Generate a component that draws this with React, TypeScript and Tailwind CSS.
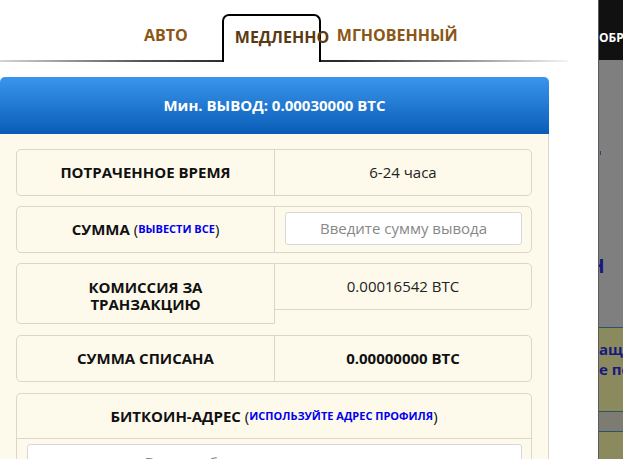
export default function App() {
  const bd = "border-[#dad7ca]";
  return (
    <div className="flex w-[623px] h-[459px] overflow-hidden bg-white font-['Open_Sans',sans-serif]">
      {/* modal */}
      <div className="w-[598px] shrink-0 bg-white flex flex-col">
        {/* tabs */}
        <div className="flex flex-col">
          <div className="flex items-end h-[60px] pl-[144px]">
            <div className="h-[46px] pb-[4px] flex items-center text-[16px] font-bold text-[#8a5716] whitespace-nowrap">АВТО</div>
            <div className="relative z-10 ml-[34px] -mb-[2px] w-[99px] h-[48px] border-2 border-b-0 border-black rounded-t-[7px] bg-white pl-[11px] flex items-center pb-[4px] text-[16px] font-bold text-[#5a3a12] whitespace-nowrap">
              МЕДЛЕННО
            </div>
            <div className="ml-[16px] h-[46px] pb-[4px] flex items-center text-[16px] font-bold text-[#8a5716] whitespace-nowrap">МГНОВЕННЫЙ</div>
          </div>
          <div className="w-[568px] h-[2px] bg-[linear-gradient(to_right,#d4d4d4,#555_25%,#2a2a2a_40%,#2a2a2a_60%,#888_80%,#f4f4f4)]" />
        </div>

        {/* panel */}
        <div className="mt-[15px] w-[549px] flex flex-col flex-1">
          <div className="h-[57px] rounded-t-[5px] bg-[linear-gradient(to_bottom,#3a95ec,#0a5db6)] flex items-center justify-center text-white text-[15px] font-bold">
            Мин. ВЫВОД: 0.00030000 BTC
          </div>
          <div className="flex-1 bg-[#fdfaec] border-r border-[#d6d6d6] pl-[16px] pr-[16px] pt-[15px] flex flex-col text-[#111]">
            {/* row 1 */}
            <div className={`flex h-[47px] rounded-[5px] border ${bd}`}>
              <div className={`w-[258px] border-r ${bd} flex items-center justify-center text-[15px] font-bold`}>ПОТРАЧЕННОЕ ВРЕМЯ</div>
              <div className="flex-1 flex items-center justify-center text-[15px] text-[#222]">6-24 часа</div>
            </div>
            {/* row 2 */}
            <div className={`mt-[10px] flex h-[47px] rounded-[5px] border ${bd}`}>
              <div className={`w-[258px] border-r ${bd} flex items-center justify-center text-[15px] font-bold whitespace-nowrap`}>
                СУММА&nbsp;<span className="font-normal">(</span><span className="text-[11px] text-[#0000ee]">ВЫВЕСТИ ВСЕ</span><span className="font-normal">)</span>
              </div>
              <div className="flex-1 pl-[10px] pr-[9px] pt-[5px]">
                <div className="h-[33px] bg-white border border-[#d8d8d8] rounded-[3px] flex items-center justify-center text-[15px] text-[#888]">
                  Введите сумму вывода
                </div>
              </div>
            </div>
            {/* row 3 */}
            <div className="mt-[10px] flex items-start">
              <div className={`w-[259px] border ${bd} rounded-l-[5px] pt-[15px] pb-[10px] text-center text-[15px] leading-[17px] font-bold`}>
                КОМИССИЯ ЗА<br />ТРАНЗАКЦИЮ
              </div>
              <div className={`flex-1 h-[47px] border border-l-0 ${bd} rounded-r-[5px] flex items-center justify-center text-[15px] text-[#222]`}>
                0.00016542 BTC
              </div>
            </div>
            {/* row 4 */}
            <div className={`mt-[11px] flex h-[47px] rounded-[5px] border ${bd}`}>
              <div className={`w-[258px] border-r ${bd} flex items-center justify-center text-[15px] font-bold`}>СУММА СПИСАНА</div>
              <div className="flex-1 flex items-center justify-center text-[15px] font-bold">0.00000000 BTC</div>
            </div>
            {/* row 5 */}
            <div className={`mt-[11px] flex-1 flex flex-col rounded-t-[5px] border border-b-0 ${bd}`}>
              <div className={`h-[45px] shrink-0 border-b ${bd} flex items-center justify-center text-[15px] font-bold whitespace-nowrap`}>
                БИТКОИН-АДРЕС&nbsp;<span className="font-normal">(</span><span className="text-[11px] text-[#0000ee]">ИСПОЛЬЗУЙТЕ АДРЕС ПРОФИЛЯ</span><span className="font-normal">)</span>
              </div>
              <div className="pl-[10px] pr-[9px] pt-[5px]">
                <div className="h-[36px] bg-white border border-[#d8d8d8] rounded-[3px] flex items-center justify-center text-[15px] text-[#888] whitespace-nowrap">
                  Введите биткоин-адрес для вывода
                </div>
              </div>
            </div>
          </div>
        </div>
      </div>

      {/* darkened background page */}
      <div className="flex-1 flex flex-col overflow-hidden border-l border-[#5a5a5a]">
        <div className="h-[60px] shrink-0 bg-[#111] flex items-center pt-[16px] text-white text-[12px] font-bold whitespace-nowrap">ОБР</div>
        <div className="h-[267px] shrink-0 bg-[#7f7f7f] flex flex-col">
          <div className="mt-[91px] ml-[1px] w-[1px] h-[4px] bg-[#3a3a7a]" />
          <div className="mt-[100px] -ml-[9px] text-[19px] font-bold text-[#16167e] leading-[22px]">Н</div>
        </div>
        <div className="h-[1px] shrink-0 bg-[#2b5562]" />
        <div className="h-[83px] shrink-0 bg-[#8b8a5e] pt-[11px] text-[15px] font-bold text-[#18187e] leading-[20px] whitespace-nowrap">
          <div>ащ</div>
          <div>е по</div>
        </div>
        <div className="h-[1px] shrink-0 bg-[#2b5562]" />
        <div className="h-[19px] shrink-0 bg-[#7c7c72]" />
        <div className="h-[1px] shrink-0 bg-[#2b5562]" />
        <div className="flex-1 bg-[#8b8a5e]" />
      </div>
    </div>
  );
}
